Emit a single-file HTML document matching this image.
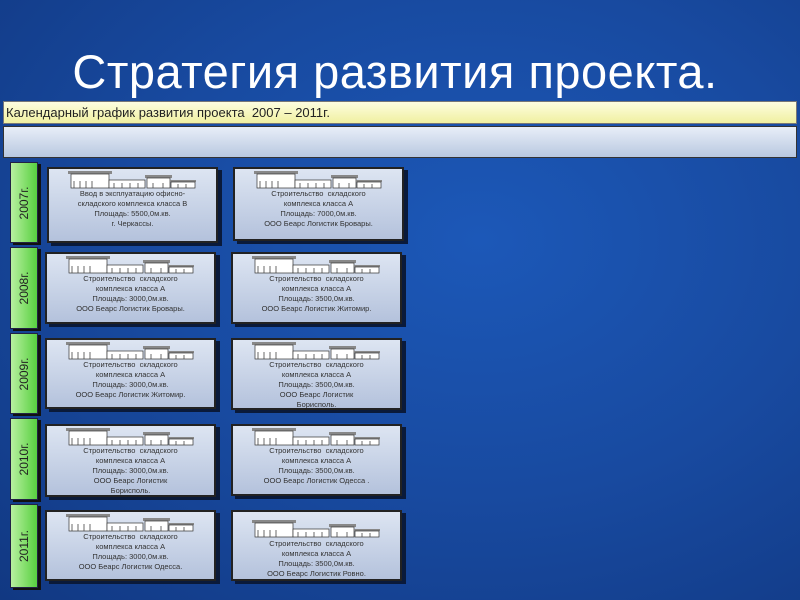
<!DOCTYPE html>
<html><head><meta charset="utf-8"><style>
body{margin:0;width:800px;height:600px;overflow:hidden;background:radial-gradient(ellipse at 60% 40%,#1c58b8 0%,#184aa0 50%,#113882 100%);font-family:"Liberation Sans",sans-serif;position:relative}
.t{position:absolute;left:0;width:790px;top:44px;text-align:center;color:#fff;font-size:47px;letter-spacing:0.5px}
.hdr{position:absolute;left:3px;top:101px;width:794px;height:23px;background:linear-gradient(#fdfde0,#f0f0a0);border:1px solid #777;box-sizing:border-box;font-size:13px;padding:3px 2px;color:#222}
.band{position:absolute;left:3px;top:126px;width:794px;height:32px;background:linear-gradient(#e8eef8,#b8c8e0);border:1px solid #333;box-sizing:border-box}
.yr{position:absolute;left:10px;width:28px;background:linear-gradient(90deg,#b8f0a0,#58d040);border:1px solid #224;box-sizing:border-box;box-shadow:3px 2px 0 #111}
.yr span{position:absolute;left:50%;top:50%;transform:translate(-50%,-50%) rotate(-90deg);font-size:12px;color:#222;white-space:nowrap}
.c{position:absolute;width:171px;background:linear-gradient(#dde5f2,#b4c2dc);border:2px solid #222;box-sizing:border-box;box-shadow:4px 3px 0 #0a1a3a;text-align:center;font-size:7.5px;line-height:10px;color:#333;overflow:hidden}
.c svg{display:block;margin:2px auto 0}
</style></head><body>
<div class="t">Стратегия развития проекта.</div>
<div class="hdr">Календарный график развития проекта&nbsp; 2007 – 2011г.</div>
<div class="band"></div>

<div class="yr" style="top:162px;height:81px"><span>2007г.</span></div>
<div class="yr" style="top:247px;height:82px"><span>2008г.</span></div>
<div class="yr" style="top:333px;height:81px"><span>2009г.</span></div>
<div class="yr" style="top:418px;height:82px"><span>2010г.</span></div>
<div class="yr" style="top:504px;height:84px"><span>2011г.</span></div>

<svg width="0" height="0" style="position:absolute"><defs><g id="b"><rect x="0" y="0" width="44" height="3" fill="#888"/><rect x="3" y="3" width="38" height="14" fill="#fff" stroke="#333" stroke-width="0.7"/><rect x="41" y="9" width="36" height="8" fill="#fff" stroke="#333" stroke-width="0.7"/><rect x="77" y="4" width="27" height="3" fill="#888"/><rect x="79" y="7" width="23" height="10" fill="#fff" stroke="#333" stroke-width="0.7"/><rect x="102" y="9" width="26" height="2" fill="#888"/><rect x="103" y="11" width="24" height="6" fill="#fff" stroke="#333" stroke-width="0.7"/><path d="M6 17V10M12 17V10M18 17V10M24 17V10M46 17v-5M54 17v-5M62 17v-5M70 17v-5M85 17v-5M95 17v-5M110 17v-4M118 17v-4" stroke="#444" stroke-width="0.8"/></g></defs></svg>

<div class="c" style="left:47px;top:167px;height:76px"><svg width="130" height="18"><use href="#b"/></svg>Ввод в эксплуатацию офисно-<br>складского комплекса класса В<br>Площадь: 5500,0м.кв.<br>г. Черкассы.</div>
<div class="c" style="left:233px;top:167px;height:74px"><svg width="130" height="18"><use href="#b"/></svg>Строительство&nbsp; складского<br>комплекса класса А<br>Площадь: 7000,0м.кв.<br>ООО Беарс Логистик Бровары.</div>

<div class="c" style="left:45px;top:252px;height:72px"><svg width="130" height="18"><use href="#b"/></svg>Строительство&nbsp; складского<br>комплекса класса А<br>Площадь: 3000,0м.кв.<br>ООО Беарс Логистик Бровары.</div>
<div class="c" style="left:231px;top:252px;height:72px"><svg width="130" height="18"><use href="#b"/></svg>Строительство&nbsp; складского<br>комплекса класса А<br>Площадь: 3500,0м.кв.<br>ООО Беарс Логистик Житомир.</div>

<div class="c" style="left:45px;top:338px;height:71px"><svg width="130" height="18"><use href="#b"/></svg>Строительство&nbsp; складского<br>комплекса класса А<br>Площадь: 3000,0м.кв.<br>ООО Беарс Логистик Житомир.</div>
<div class="c" style="left:231px;top:338px;height:72px"><svg width="130" height="18"><use href="#b"/></svg>Строительство&nbsp; складского<br>комплекса класса А<br>Площадь: 3500,0м.кв.<br>ООО Беарс Логистик<br>Борисполь.</div>

<div class="c" style="left:45px;top:424px;height:73px"><svg width="130" height="18"><use href="#b"/></svg>Строительство&nbsp; складского<br>комплекса класса А<br>Площадь: 3000,0м.кв.<br>ООО Беарс Логистик<br>Борисполь.</div>
<div class="c" style="left:231px;top:424px;height:72px"><svg width="130" height="18"><use href="#b"/></svg>Строительство&nbsp; складского<br>комплекса класса А<br>Площадь: 3500,0м.кв.<br>ООО Беарс Логистик Одесса .</div>

<div class="c" style="left:45px;top:510px;height:71px"><svg width="130" height="18"><use href="#b"/></svg>Строительство&nbsp; складского<br>комплекса класса А<br>Площадь: 3000,0м.кв.<br>ООО Беарс Логистик Одесса.</div>
<div class="c" style="left:231px;top:510px;height:71px"><svg width="130" height="22" style="margin-top:5px"><use href="#b" y="3"/></svg>Строительство&nbsp; складского<br>комплекса класса А<br>Площадь: 3500,0м.кв.<br>ООО Беарс Логистик Ровно.</div>
</body></html>
